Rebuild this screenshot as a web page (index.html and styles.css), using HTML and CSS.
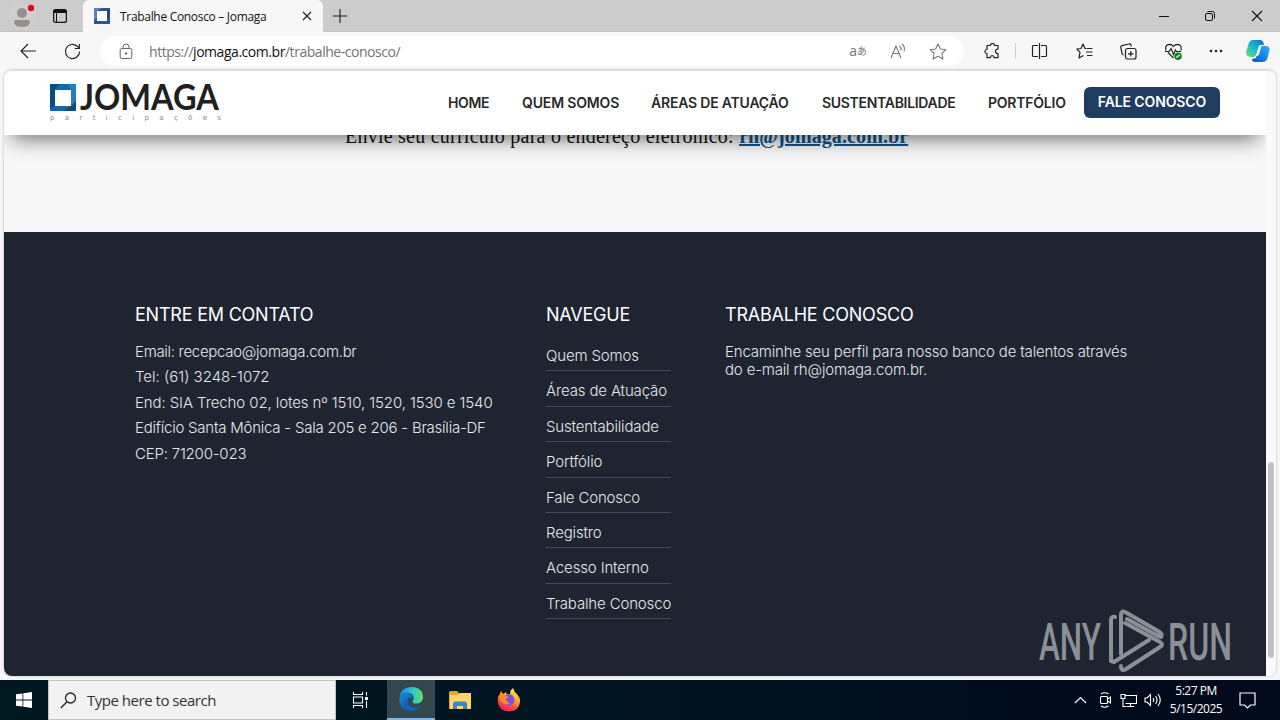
FILE: index.html
```html
<!DOCTYPE html>
<html lang="pt-BR">
<head>
    <meta charset="UTF-8">
    <meta name="viewport" content="width=device-width, initial-scale=1.0">
    <title>Trabalhe Conosco – Jomaga</title>
    <link rel="stylesheet" href="styles.css">
</head>
<body>
    <div class="tabstrip">
        <div class="tab-tools">
            <svg class="profile" width="28" height="28" viewBox="0 0 28 28">
                <circle cx="14" cy="14" r="13" fill="#d0cfce"/>
                <circle cx="14" cy="11" r="5" fill="#96918e"/>
                <path d="M6 19.500Q6 18 8 18h12q2 0 2 1.500Q22 25 14 25T6 19.500z" fill="#96918e"/>
                <circle cx="23" cy="6" r="3.200" fill="#e00b1c"/>
            </svg>
            <svg class="tab-menu" width="16" height="16" viewBox="0 0 16 16">
                <rect x="1.600" y="1.600" width="12.800" height="12.800" rx="2" fill="none" stroke="#111" stroke-width="1.200"/>
                <path d="M1.500 5V3q0-1.500 1.500-1.500h10q1.500 0 1.500 1.500v2z" fill="#111"/>
                <path d="M4.500 4v10" stroke="#111"/>
            </svg>
        </div>
        <div class="tab">
            <svg width="16" height="16" viewBox="0 0 16 16">
                <path d="M0 0h16v16H0z" fill="#2d5590"/>
                <path d="M0 0h8L3 3v7L0 12z" fill="#5d82b8"/>
                <path d="M16 0v9l-3 2V3z" fill="#27457e"/>
                <path d="M3 3h10v10H3z" fill="#fff"/>
            </svg>
            <span class="tab-title">Trabalhe Conosco – Jomaga</span>
            <svg width="10" height="10" viewBox="0 0 10 10" stroke="#222" stroke-width="1.200"><path d="M1 1l8 8M9 1L1 9"/></svg>
        </div>
        <svg class="new-tab" width="14" height="14" viewBox="0 0 14 14" stroke="#222" stroke-width="1.200"><path d="M7 0v14M0 7h14"/></svg>
        <div class="window-buttons">
            <svg width="10" height="12" viewBox="0 0 10 12" stroke="#111"><path d="M0 6.500h10"/></svg>
            <svg width="12" height="12" viewBox="0 0 12 12" fill="none" stroke="#111"><rect x="1.500" y="3.500" width="7" height="7" rx="1.500"/><path d="M3.500 1.500h5q2 0 2 2v5"/></svg>
            <svg width="12" height="12" viewBox="0 0 12 12" stroke="#111" stroke-width="1.100"><path d="M1 1l10 10M11 1L1 11"/></svg>
        </div>
    </div>

    <div class="toolbar">
        <svg class="back" width="17" height="16" viewBox="0 0 17 16" fill="none" stroke="#222" stroke-width="1.200"><path d="M16 8H1M8 1L1 8l7 7"/></svg>
        <svg class="reload" width="17" height="17" viewBox="0 0 18 18" fill="none" stroke="#222" stroke-width="1.200"><path d="M16.500 9a7.500 7.500 0 1 1-2.700-5.800L16 5.500M16.300 1v4.800h-5"/></svg>
        <div class="address">
            <svg width="14" height="17" viewBox="0 0 14 17" fill="none" stroke="#666"><rect x="1.200" y="5.500" width="11.600" height="10" rx="1.500"/><path d="M4 5.500V4a3 3 0 0 1 6 0v1.500"/><circle cx="7" cy="10.500" r=".8" fill="#555"/></svg>
            <span class="url">https://<b>jomaga.com.br</b>/trabalhe-conosco/</span>
            <span class="translate">a<small>あ</small></span>
            <svg class="read" width="17" height="16" viewBox="0 0 17 16" fill="none" stroke="#777" stroke-width="1.100"><path d="M1 15L6 3l5 12M3 10.500h6M9.500 3q2 1.500 1.500 4.500M12 1q3.500 3 2 7.500"/></svg>
            <svg width="18" height="17" viewBox="0 0 18 17" fill="none" stroke="#777" stroke-width="1.100" stroke-linejoin="round"><path d="M9 1l2.400 5 5.500.7-4 3.800 1 5.500L9 13.300 4.100 16l1-5.500-4-3.800 5.500-.7z"/></svg>
        </div>
        <div class="actions">
            <svg width="16" height="17" viewBox="0 0 16 17" fill="none" stroke="#222" stroke-width="1.200" stroke-linejoin="round"><path d="M3 2.500h3.500a2 2 0 0 1 4 0H14V6q-2.500 0-2.500 2.300T14 10.700v4H10.200q-.2-2-2-2t-2 2H3v-4.200a2 2 0 1 1 0-4z"/></svg>
            <i class="divider"></i>
            <svg width="17" height="16" viewBox="0 0 17 16" fill="none" stroke="#222" stroke-width="1.200"><path d="M7 2.500H2.500q-1 0-1 1v9q0 1 1 1H7M10 2.500h4.500q1 0 1 1v9q0 1-1 1H10M8.500 0v16"/></svg>
            <svg width="17" height="16" viewBox="0 0 17 16" fill="none" stroke="#222" stroke-width="1.200" stroke-linejoin="round"><path d="M10.500 5.500H9L7 1 5 5.500.8 6l3.200 3.200L3 15l4.500-2.500M11 5.500h5.500M10 9h6.500M11 12.500h5.500"/></svg>
            <svg width="17" height="17" viewBox="0 0 17 17" fill="none" stroke="#222" stroke-width="1.200"><rect x="5.500" y="5.500" width="10.500" height="10.500" rx="2"/><path d="M10.800 8v5.500M8 10.800h5.500M3.500 12Q2 11.500 2 10L.8 4.500Q.5 3 2 2.600L9 1q1.500-.3 2 1l.3 1.500"/></svg>
            <svg width="17" height="17" viewBox="0 0 17 17" fill="none" stroke="#222" stroke-width="1.200"><path d="M8.500 15L3 9.500M1 7.500Q-.5 1.500 4.500 1.300q2.500 0 4 2.200 1.500-2.200 4-2.200Q17 1.500 16 7.500M0 8.500h4l2-3 2.500 6 2-4.500 1 1.500H16"/><circle cx="13" cy="13.200" r="3.800" fill="#16841b" stroke="none"/><path d="M11.200 14.500l3.500-2.500" stroke="#fff"/></svg>
            <svg width="14" height="4" viewBox="0 0 14 4" fill="#222"><circle cx="2" cy="2" r="1.300"/><circle cx="7" cy="2" r="1.300"/><circle cx="12" cy="2" r="1.300"/></svg>
        </div>
        <svg class="copilot" width="24" height="22" viewBox="0 0 24 22">
            <defs>
                <linearGradient id="copilotA" x1="0" y1="1" x2="1" y2="0"><stop offset="0" stop-color="#68e46d"/><stop offset=".5" stop-color="#1bb7d2"/><stop offset="1" stop-color="#1266c9"/></linearGradient>
                <linearGradient id="copilotB" x1="0" y1="1" x2="1" y2="0"><stop offset="0" stop-color="#0b4fc4"/><stop offset=".5" stop-color="#1684ea"/><stop offset="1" stop-color="#28baf0"/></linearGradient>
            </defs>
            <path d="M15 6h5q4 0 3.500 4l-2 8q-1 4-5 4H9q-3 0-3-3l4-1 2-9q.5-3 3-3z" fill="url(#copilotB)"/>
            <path d="M7 0h7q3 0 3.500 3l.5 2h-3q-2 0-2.500 2l-2 7q-.6 3-4 3H4q-4-1-4-5L2.500 4Q3.500 0 7 0z" fill="url(#copilotA)"/>
            <path d="M13 6h2.500l-2.300 8q-.5 2-2.700 2H9q1.300-1 1.700-2.500z" fill="#f7f7f7"/>
        </svg>
    </div>

    <div class="viewport">
        <div class="page">
            <header class="site-header">
                <svg class="logo" width="180" height="42" viewBox="0 0 180 42">
                    <path d="M0 0h26v27H0z" fill="#1767aa"/>
                    <path d="M0 0h9l-4 6v16l-5 2z" fill="#094d80"/>
                    <path d="M18 0h8v20l-5 2V6z" fill="#2580c2"/>
                    <path d="M26 17v10H13l8-5z" fill="#174974"/>
                    <path d="M5 6h16v16H5z" fill="#fff"/>
                    <text class="logo-name" x="30" y="26" textLength="139" lengthAdjust="spacingAndGlyphs">JOMAGA</text>
                    <text class="logo-sub" x="0" y="36" textLength="171">participações</text>
                </svg>
                <nav class="menu">
                    <a class="home">HOME</a>
                    <a class="quem">QUEM SOMOS</a>
                    <a class="areas">ÁREAS DE ATUAÇÃO</a>
                    <a class="sust">SUSTENTABILIDADE</a>
                    <a class="port">PORTFÓLIO</a>
                </nav>
                <a class="cta">FALE CONOSCO</a>
            </header>
            <main class="content">
                <p>Envie seu currículo para o endereço eletrônico: <a>rh@jomaga.com.br</a></p>
            </main>
            <footer class="site-footer">
                <section class="contact">
                    <h2>ENTRE EM CONTATO</h2>
                    <p class="email">Email: recepcao@jomaga.com.br</p>
                    <p class="tel">Tel: (61) 3248-1072</p>
                    <p class="street">End: SIA Trecho 02, lotes nº 1510, 1520, 1530 e 1540</p>
                    <p class="building">Edifício Santa Mônica - Sala 205 e 206 - Brasília-DF</p>
                    <p class="zip">CEP: 71200-023</p>
                </section>
                <section class="links">
                    <h2>NAVEGUE</h2>
                    <ul>
                        <li>Quem Somos</li>
                        <li>Áreas de Atuação</li>
                        <li>Sustentabilidade</li>
                        <li>Portfólio</li>
                        <li>Fale Conosco</li>
                        <li>Registro</li>
                        <li>Acesso Interno</li>
                        <li>Trabalhe Conosco</li>
                    </ul>
                </section>
                <section class="jobs">
                    <h2>TRABALHE CONOSCO</h2>
                    <p>Encaminhe seu perfil para nosso banco de talentos através<br>do e-mail rh@jomaga.com.br.</p>
                </section>
            </footer>
        </div>
        <div class="scrollbar"><div class="thumb"></div></div>
    </div>

    <svg class="watermark" width="202" height="64" viewBox="0 0 202 64">
        <text x="1" y="51" textLength="62" lengthAdjust="spacingAndGlyphs">ANY</text>
        <text x="130" y="51" textLength="64" lengthAdjust="spacingAndGlyphs">RUN</text>
        <g fill="none" stroke="#8b9096" stroke-width="4" stroke-linejoin="round" stroke-linecap="round">
            <path d="M77 8q-4-1-4 3v41l3 1 35-22"/>
            <path d="M83 45V6q0-5 4-3l33 19q5 3 3 6l-3-1-31-17"/>
            <path d="M83 57q0 6 5 3l34-22q4-2 0-5L87 14"/>
        </g>
    </svg>

    <div class="taskbar">
        <svg class="start" width="16" height="16" viewBox="0 0 16 16" fill="#fff"><path d="M0 2.300l6.500-.9v6.200H0zM7.300 1.300L16 0v7.600H7.300zM0 8.400h6.500v6.200L0 13.700zM7.300 8.400H16V16l-8.700-1.300z"/></svg>
        <div class="search">
            <svg width="17" height="17" viewBox="0 0 17 17" fill="none" stroke="#222" stroke-width="1.300"><circle cx="10.500" cy="6" r="5"/><path d="M7 9.800L.8 16"/></svg>
            <span>Type here to search</span>
        </div>
        <div class="task view">
            <svg width="17" height="16" viewBox="0 0 17 16" fill="none" stroke="#fff" stroke-width="1.100"><path d="M1.500 0v2.500h9V0M1.500 16v-2.500h9V16M1.500 5h9v6h-9zM14.500 0v3.500M14.500 9v7"/><path d="M13 5h3v3h-3z" fill="#fff" stroke="none"/></svg>
        </div>
        <div class="task active">
            <svg width="24" height="24" viewBox="0 0 24 24">
                <defs>
                    <linearGradient id="edgeTop" x1="0" y1=".5" x2="1" y2=".5"><stop offset="0" stop-color="#1689d8"/><stop offset=".55" stop-color="#2bc3d2"/><stop offset="1" stop-color="#65e060"/></linearGradient>
                    <linearGradient id="edgeLow" x1="0" y1="0" x2="1" y2="1"><stop offset="0" stop-color="#1689d8"/><stop offset="1" stop-color="#0b4b9a"/></linearGradient>
                </defs>
                <path d="M.5 10Q2 0 12.500 0 24 .5 24 10.500q-.5 6-7 6-4 0-3.500-2 2-2.500 1-5Q12 5 6.500 6 2 7 .5 10z" fill="url(#edgeTop)"/>
                <path d="M.2 12Q.5 6 6.500 6q6 0 7 5-5-1-5 4 1 6 8 6 3 0 5.500-2-4 5-10 5Q.8 23.500.2 12z" fill="url(#edgeLow)"/>
                <path d="M10 10q-4 4-1 8 4 5 12 1.500Q18 24 12 24q-7-1-7-7 0-5 5-7z" fill="#1063bd"/>
            </svg>
        </div>
        <div class="task">
            <svg width="22" height="19" viewBox="0 0 22 19"><path d="M0 1.500Q0 0 1.500 0H8l2 2h12v16H0z" fill="#e5a42b"/><path d="M1 4l9-.5L12 2h10v16H1z" fill="#ffd766"/><path d="M4 18v-5q0-2.500 2.500-2.500h9q2.500 0 2.500 2.500v5h-4v-3H8v3z" fill="#3489c9"/></svg>
        </div>
        <div class="task">
            <svg width="24" height="24" viewBox="0 0 24 24">
                <defs><linearGradient id="fox" x1=".8" y1="0" x2=".3" y2="1"><stop offset="0" stop-color="#fff14f"/><stop offset=".35" stop-color="#ffb52b"/><stop offset=".65" stop-color="#ff5c35"/><stop offset="1" stop-color="#ef1260"/></linearGradient></defs>
                <path d="M4 3l2 3 3-2 .5 2L13 6q0-4 3-6 1 4 4 6 3.500 4 3 8-1 9-11 9.500Q1 23 .7 12.500.7 8 3 5.500z" fill="url(#fox)"/>
                <path d="M8 8q4-4 8 0 3 4 0 8-5 4-9-1 3 1 5-1l-3-2q-2-1-1-4z" fill="#7750df"/>
                <path d="M3 7q5-1 6 1l3 1-3 2q-1 4 4 4-3 3-7 0-4-3-3-8z" fill="#ff8b28"/>
            </svg>
        </div>
        <div class="tray">
            <svg width="13" height="8" viewBox="0 0 13 8" fill="none" stroke="#fff" stroke-width="1.200"><path d="M1 7l5.500-5.500L12 7"/></svg>
            <svg class="meet" width="13" height="16" viewBox="0 0 13 16" fill="none" stroke="#fff" stroke-width="1.100"><rect x="1.500" y="4.500" width="7" height="7" rx="1"/><path d="M8.500 7L11.500 5v6l-3-2M2 2q3.500-2.500 7.500 0M2 14q3.500 2.500 7.500 0"/></svg>
            <svg class="network" width="17" height="15" viewBox="0 0 17 15" fill="none" stroke="#fff" stroke-width="1.100"><path d="M5.500 2.500h11v8h-11M10.500 10.500v3M6.500 13.500H14M1 1.500h4v4H1zM3 5.500v8h3"/></svg>
            <svg class="sound" width="17" height="14" viewBox="0 0 17 14" fill="none" stroke="#fff" stroke-width="1.100"><path d="M1 5v4h2l3.500 3.500v-11L3 5zM9 5q1.500 2 0 4M11.500 3q3 4 0 8M14 1q4.500 6 0 12"/></svg>
            <div class="clock"><span>5:27 PM</span><span>5/15/2025</span></div>
            <svg class="notice" width="17" height="17" viewBox="0 0 17 17" fill="none" stroke="#fff" stroke-width="1.200"><path d="M1 1h15v12h-4.500l-3 3-3-3H1z"/></svg>
        </div>
    </div>
</body>
</html>
```
FILE: styles.css
```css
* {
    box-sizing: border-box;
}

body {
    margin: 0;
    width: 1280px;
    height: 720px;
    overflow: hidden;
    display: flex;
    flex-direction: column;
    position: relative;
    background: #f7f7f7;
    font-family: "Open Sans", sans-serif;
}

svg {
    display: block;
    flex: none;
}

/* browser tabs */
.tabstrip {
    height: 32px;
    display: flex;
    align-items: center;
    background: #ccc;
    flex: none;
    border-bottom: 1px solid #c2c2c2;
}

.tab-tools {
    width: 83px;
    display: flex;
    align-items: center;
    padding-left: 8px;
    gap: 16px;
}

.tab {
    width: 240px;
    height: 32px;
    display: flex;
    align-items: center;
    align-self: flex-start;
    padding: 0 11px;
    background: #f7f7f7;
    border-radius: 6px 6px 0 0;
}

.tab-title {
    flex: 1;
    margin-left: 10px;
    font-size: 12px;
    letter-spacing: -0.31px;
    color: #111;
    white-space: nowrap;
}

.new-tab {
    margin-left: 10px;
}

.window-buttons {
    margin-left: auto;
    display: flex;
    align-items: center;
    gap: 35px;
    padding-right: 17px;
}

/* address row */
.toolbar {
    height: 38px;
    display: flex;
    align-items: center;
    padding: 0 10px 0 20px;
    flex: none;
}

.reload {
    margin-left: 27px;
}

.address {
    width: 864px;
    height: 30px;
    margin-left: 19px;
    padding: 0 17px 0 19px;
    border-radius: 15px;
    background: #fff;
    display: flex;
    align-items: center;
}

.url {
    flex: 1;
    margin-left: 16px;
    font-size: 14px;
    letter-spacing: -0.46px;
    color: #747474;
}

.url b {
    font-weight: 400;
    color: #111;
}

.translate {
    font-size: 14px;
    color: #777;
    display: flex;
    align-items: center;
    line-height: 16px;
    margin-right: 23px;
}

.translate small {
    font-family: "Noto Sans CJK JP", sans-serif;
    font-size: 10px;
}

.read {
    margin-right: 22px;
}

.actions {
    display: flex;
    align-items: center;
    gap: 27.5px;
    margin-left: 20px;
}

.divider {
    width: 1px;
    height: 16px;
    margin: 0 -12.5px;
    background: #ccc;
}

.copilot {
    margin-left: auto;
}

/* web page */
.viewport {
    height: 606px;
    margin: 0 4px 4px;
    display: flex;
    overflow: hidden;
    border-top: 1px solid #dedede;
    border-radius: 8px;
    box-shadow: 0 0 3px rgba(0, 0, 0, 0.25);
    flex: none;
}

.page {
    width: 1262px;
    display: flex;
    flex-direction: column;
    overflow: hidden;
    background: #f7f7f7;
}

.scrollbar {
    width: 10px;
    background: #fafafa;
    padding: 391px 2px 0;
}

.thumb {
    height: 196px;
    width: 6px;
    border-radius: 3px;
    background: #c1c1c1;
}

.site-header {
    height: 64px;
    flex: none;
    display: flex;
    align-items: flex-start;
    background: #fff;
    padding: 0 46px;
    position: relative;
    z-index: 1;
    box-shadow: 0 12px 20px -8px rgba(0, 0, 0, 0.55);
}

.logo {
    margin-top: 13px;
}

.logo-name {
    font: 700 36px Lato, sans-serif;
    fill: #202020;
}

.logo-sub {
    font: 7px "DejaVu Sans", sans-serif;
    fill: #888;
}

.menu {
    display: flex;
    margin-left: 218px;
    padding-top: 23px;
    width: 636px;
    font: 600 14px/18px Inter, sans-serif;
    color: #292929;
}

.menu a {
    white-space: nowrap;
}

.home {
    width: 74px;
    letter-spacing: -0.4px;
}

.quem {
    width: 129px;
    letter-spacing: -0.15px;
}

.areas {
    width: 171px;
    letter-spacing: -0.2px;
}

.sust {
    width: 166px;
    letter-spacing: -0.3px;
}

.port {
    letter-spacing: -0.22px;
}

.cta {
    width: 136px;
    height: 31px;
    margin-top: 16px;
    border-radius: 6px;
    background: #203c60;
    color: #fff;
    text-align: center;
    white-space: nowrap;
    font: 600 14px/30px Inter, sans-serif;
    letter-spacing: -0.12px;
}

.content {
    height: 97px;
    flex: none;
}

.content p {
    margin: -11px 0 0 341px;
    font: 20px/24px "Liberation Serif", serif;
    color: #111;
    white-space: nowrap;
    letter-spacing: 0.24px;
}

.content a {
    font-weight: 700;
    letter-spacing: 0.1px;
    color: #0c5590;
    text-decoration: underline;
}

.site-footer {
    flex: 1;
    display: grid;
    grid-template-columns: 411px 179px 1fr;
    padding: 72px 100px 0 131px;
    background: #1e2530;
    color: #e5e7ea;
    font: 300 15px/18px Inter, sans-serif;
}

.site-footer h2 {
    margin: 0;
    font-size: 18px;
    font-weight: 400;
    line-height: 22px;
    letter-spacing: -0.22px;
    color: #fff;
}

.site-footer p {
    margin: 0 0 7.4px;
    white-space: nowrap;
}

.site-footer h2 + p {
    margin-top: 17px;
}

.site-footer .email {
    letter-spacing: -0.3px;
}

.street {
    letter-spacing: -0.1px;
}

.building {
    letter-spacing: -0.23px;
}

.zip {
    letter-spacing: -0.2px;
}

.jobs p {
    letter-spacing: -0.17px;
}

.links ul {
    list-style: none;
    margin: 10px 0 0;
    padding: 0;
    width: 125px;
}

.links li {
    height: 35.4px;
    padding-top: 11px;
    border-bottom: 1px solid #454b54;
    letter-spacing: -0.15px;
    white-space: nowrap;
}

/* recording mark over the page */
.watermark {
    position: absolute;
    left: 1038px;
    top: 609px;
}

.watermark text {
    font: 500 52px Roboto, sans-serif;
    fill: #8b9096;
}

/* windows taskbar */
.taskbar {
    height: 40px;
    flex: none;
    display: flex;
    align-items: center;
    background: linear-gradient(90deg, #001820, #00151f 45%, #000b1c 80%, #000a1b);
}

.start {
    margin: 0 16px;
}

.search {
    width: 288px;
    height: 40px;
    display: flex;
    align-items: center;
    padding-left: 11px;
    gap: 10px;
    background: #f2f2f2;
    border: 1px solid #c5c4bd;
    font-size: 15px;
    letter-spacing: -0.48px;
    color: #333;
}

.task {
    width: 49px;
    height: 40px;
    display: flex;
    align-items: center;
    justify-content: center;
}

.view {
    width: 51px;
    padding-right: 3px;
}

.active {
    width: 48px;
    background: #34474f;
    border-bottom: 2px solid #76b9ed;
}

.tray {
    height: 40px;
    margin-left: auto;
    display: flex;
    align-items: center;
    padding-right: 24px;
    color: #fff;
}

.meet {
    margin-left: 12px;
}

.network {
    margin-left: 8px;
}

.sound {
    margin-left: 7px;
}

.clock {
    width: 70px;
    display: flex;
    flex-direction: column;
    align-items: center;
    font-size: 12px;
    line-height: 18px;
    letter-spacing: -0.5px;
}

.notice {
    margin-left: 8px;
}
```
